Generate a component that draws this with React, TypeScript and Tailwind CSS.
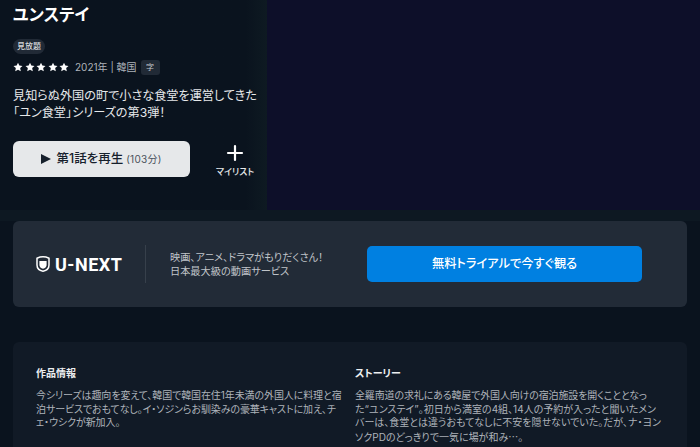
import { Plus } from 'lucide-react'

const JP = "font-['Inter','Noto_Sans_CJK_JP',sans-serif]"

function Star() {
  return (
    <svg viewBox="0 0 24 24" className="w-[10px] h-[10px] fill-white">
      <path d="M12 1.5l3.2 7 7.6.9-5.6 5.2 1.5 7.6L12 18.4l-6.7 3.8 1.5-7.6L1.2 9.4l7.6-.9z" />
    </svg>
  )
}

function Shield() {
  return (
    <svg viewBox="0 0 14 16" className="w-[14px] h-[16px]">
      <path d="M1 2.2C4.6.6 9.4.6 13 2.2V9c0 3.2-2.6 5.6-6 6.2C3.6 14.6 1 12.2 1 9z" fill="none" stroke="#fff" strokeWidth="1.5" />
      <path d="M3.4 5h7.2V9c0 1.9-1.5 3.4-3.6 3.8C4.9 12.4 3.4 10.9 3.4 9z" fill="#fff" />
    </svg>
  )
}

export default function App() {
  return (
    <div className={`${JP} w-[700px] h-[447px] overflow-hidden bg-[#0a131e] [font-feature-settings:'palt']`}>
      <section className="flex h-[210px]">
        <div className="w-[267px] shrink-0 pl-[13px] bg-gradient-to-r from-[#0a131e] from-[92%] to-[#0e1a22]">
          <h1 className="text-[16.5px] leading-[20px] mt-[5px] font-semibold text-white">ユンステイ</h1>
          <span className="inline-block mt-[14px] h-[15px] px-[4px] rounded-full bg-[#212a36] text-[8px] leading-[15px] font-medium text-[#d5d8dc]">見放題</span>
          <div className="flex items-center mt-[4px] h-[16px]">
            <div className="flex gap-[1.5px]">
              <Star /><Star /><Star /><Star /><Star />
            </div>
            <span className="ml-[6px] text-[10px] text-[#aeb3ba]">2021年 | 韓国</span>
            <span className="ml-[4px] w-[19px] h-[15px] rounded-[3px] bg-[#212a36] text-[8px] leading-[15px] text-center text-[#c4c8cd]">字</span>
          </div>
          <p className="mt-[12px] text-[12.15px] leading-[17px] text-[#e6e8ea] whitespace-nowrap">
            見知らぬ外国の町で小さな食堂を運営してきた<br />「ユン食堂」シリーズの第3弾！
          </p>
          <div className="flex mt-[20px]">
            <button className="flex items-center justify-center w-[178px] h-[36px] rounded-[6px] bg-[#e6e8ea] text-[#16202c]">
              <svg viewBox="0 0 10 10" className="w-[10px] h-[10px] mr-[5px] fill-[#16202c]"><path d="M0 0l10 5-10 5z" /></svg>
              <span className="text-[12.5px] font-medium">第1話を再生</span>
              <span className="ml-[3px] text-[10px] tracking-[0.3px] text-[#4a525c]">(103分)</span>
            </button>
            <div className="w-[64px] ml-[13px] flex flex-col items-center">
              <Plus size={24} strokeWidth={2.2} className="text-white" />
              <span className="mt-[1px] text-[9px] leading-[12px] font-medium text-[#e6e8ea]">マイリスト</span>
            </div>
          </div>
        </div>
        <div className="flex-1 bg-[#0d0f29]" />
      </section>

      <div className="h-[11px] bg-[#0d1822]" />

      <section className="mx-[13px] h-[86px] rounded-[6px] bg-[#222b37] flex items-center">
        <div className="w-[132px] shrink-0 pl-[23px] flex items-center gap-[5px]">
          <Shield />
          <span className="font-['Roboto',sans-serif] font-bold text-[18px] tracking-[0.5px] text-white">U-NEXT</span>
        </div>
        <div className="w-px h-[38px] bg-[#37404b]" />
        <p className="ml-[24px] w-[197px] shrink-0 text-[10.2px] leading-[14px] text-[#c0c4c9]">
          映画、アニメ、ドラマがもりだくさん！<br />日本最大級の動画サービス
        </p>
        <button className="w-[275px] h-[36px] rounded-[5px] bg-[#0080e1] text-white text-[12.25px] font-medium">無料トライアルで今すぐ観る</button>
      </section>

      <section className="mx-[13px] mt-[35px] h-[120px] rounded-[6px] bg-[#111a26] flex pt-[24px] pl-[23px]">
        <div className="w-[319px] shrink-0">
          <h2 className="text-[10px] leading-[14px] font-bold text-[#eceef0]">作品情報</h2>
          <p className="mt-[9px] w-[310px] text-[10px] leading-[13.5px] tracking-[-0.1px] text-[#aeb3ba] whitespace-nowrap">
            今シリーズは趣向を変えて、韓国で韓国在住1年未満の外国人に料理と宿<br />泊サービスでおもてなし。イ・ソジンらお馴染みの豪華キャストに加え、チ<br />ェ・ウシクが新加入。
          </p>
        </div>
        <div className="flex-1">
          <h2 className="text-[10px] leading-[14px] font-bold text-[#eceef0]">ストーリー</h2>
          <p className="mt-[9px] text-[10px] leading-[13.5px] text-[#aeb3ba] whitespace-nowrap">
            <span className="tracking-[-0.15px]">全羅南道の求礼にある韓屋で外国人向けの宿泊施設を開くこととなっ</span><br />た“ユンステイ”。初日から満室の4組、14人の予約が入ったと聞いたメン<br />バーは、食堂とは違うおもてなしに不安を隠せないでいた。だが、ナ・ヨン<br />ソクPDのどっきりで一気に場が和み<span className="font-['Noto_Sans_CJK_JP',sans-serif]">…</span>。
          </p>
        </div>
      </section>
    </div>
  )
}
